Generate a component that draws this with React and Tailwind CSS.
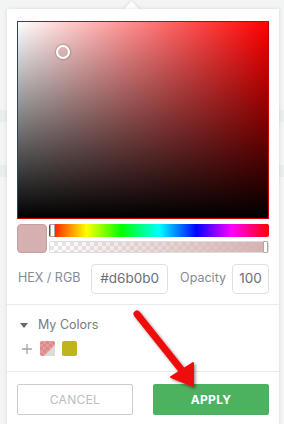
export default function App() {
  return (
    <div
      className="relative w-[284px] h-[424px] overflow-hidden bg-[linear-gradient(to_bottom,#f3f5f5_0px,#f3f5f5_110px,#e9eded_110px,#e9eded_122px,#f3f5f5_122px,#f3f5f5_165px,#e9eded_165px,#e9eded_177px,#f3f5f5_177px)]"
      style={{ fontFamily: 'Inter, "Noto Sans", sans-serif' }}
    >
      {/* popover notch */}
      <div className="absolute left-[124.5px] top-[3.5px] w-[13px] h-[13px] rotate-45 bg-white shadow-[0_0_3px_rgba(0,0,0,0.15)]" />

      {/* panel */}
      <div className="relative z-10 ml-[7px] mt-[9px] w-[272px] h-[430px] bg-white shadow-[0_0_4px_rgba(0,0,0,0.12)] flex flex-col">
        <div className="px-[10px] pt-[12px]">
          {/* saturation / value area */}
          <div className="relative h-[198px] bg-[#ff0000] border border-black/20">
            <div className="h-full w-full bg-[linear-gradient(to_right,#fff,rgba(255,255,255,0))]">
              <div className="h-full w-full bg-[linear-gradient(to_bottom,rgba(0,0,0,0),#000)]" />
            </div>
            <div className="absolute left-[38px] top-[23px] w-[14px] h-[14px] rounded-full border-2 border-white shadow-[0_0_2px_rgba(0,0,0,0.6)]" />
          </div>

          {/* swatch + sliders */}
          <div className="mt-[5px] flex gap-[2px]">
            <div className="w-[30px] h-[29px] rounded-[4px] bg-[#d6b0b0] border border-[#c5a0a0]" />
            <div className="flex-1 flex flex-col gap-[4px]">
              <div className="relative h-[13px] rounded-[2px] bg-[linear-gradient(to_right,#f00,#ff0_17%,#0f0_33%,#0ff_50%,#00f_67%,#f0f_83%,#f00)]">
                <div className="absolute left-[1px] top-0 w-[5px] h-[13px] bg-white border border-[#aaa] rounded-[1px]" />
              </div>
              <div className="relative h-[12px] rounded-[2px] border border-[#ddd] bg-[conic-gradient(#e6e6e6_25%,#fff_0_50%,#e6e6e6_0_75%,#fff_0)] bg-[length:8px_8px]">
                <div className="h-full w-full bg-[linear-gradient(to_right,rgba(214,176,176,0),#d6b0b0)]" />
                <div className="absolute right-[0px] top-[-1px] w-[5px] h-[12px] bg-white border border-[#aaa] rounded-[1px]" />
              </div>
            </div>
          </div>

          {/* hex / opacity */}
          <div className="mt-[11px] flex items-center h-[29px] whitespace-nowrap">
            <span className="ml-[1px] shrink-0 text-[12.5px] text-[#858a92]">HEX / RGB</span>
            <div className="ml-auto shrink-0 w-[77px] h-[30px] rounded-[4px] border border-[#dde1e4] flex items-center justify-center text-[13.5px] text-[#6b6f75]">
              #d6b0b0
            </div>
            <span className="ml-[12px] shrink-0 text-[12.5px] text-[#858a92]">Opacity</span>
            <div className="ml-[6px] shrink-0 w-[37px] h-[30px] rounded-[4px] border border-[#dde1e4] flex items-center justify-center text-[13.5px] text-[#6b6f75]">
              100
            </div>
          </div>
        </div>

        <div className="mt-[11px] h-px bg-[#e6eaeb]" />

        {/* my colors */}
        <div className="px-[10px] pt-[13px] pb-[15px]">
          <div className="flex items-center h-[14px]">
            <svg width="8" height="5" viewBox="0 0 8 5" className="ml-[3px]">
              <path d="M0 0 L8 0 L4 5 Z" fill="#666" />
            </svg>
            <span className="ml-[10px] text-[12.5px] text-[#777b80]">My Colors</span>
          </div>
          <div className="mt-[9px] flex items-center h-[15px]">
            <svg width="10" height="10" viewBox="0 0 10 10" className="ml-[5px]">
              <path d="M5 0 V10 M0 5 H10" stroke="#a0a4a8" strokeWidth="1.3" />
            </svg>
            <div className="ml-[8px] relative w-[15px] h-[15px] rounded-[2px] overflow-hidden bg-[conic-gradient(#e89a9a_25%,#d98a8a_0_50%,#e89a9a_0_75%,#d98a8a_0)] bg-[length:6px_6px]">
              <svg width="15" height="15" viewBox="0 0 15 15" className="absolute inset-0">
                <path d="M15 4 L15 15 L4 15 Z" fill="#dcdcdc" />
              </svg>
            </div>
            <div className="ml-[7px] w-[15px] h-[15px] rounded-[2px] bg-[#c0b41c]" />
          </div>
        </div>

        <div className="h-px bg-[#e6eaeb]" />

        {/* buttons */}
        <div className="px-[10px] pt-[12px] flex justify-between">
          <button className="w-[116px] h-[31px] rounded-[2px] border border-[#c8cdd2] bg-white text-[12px] text-[#b8bdc4] tracking-[0.3px]">
            CANCEL
          </button>
          <button className="w-[116px] h-[31px] rounded-[2px] bg-[#4cb25f] text-[12px] font-bold text-white tracking-[0.3px]">
            APPLY
          </button>
        </div>
      </div>

      {/* red annotation arrow */}
      <svg
        className="absolute left-0 top-0 z-20 pointer-events-none"
        width="284"
        height="424"
        viewBox="0 0 284 424"
      >
        <defs>
          <filter id="sh" x="-20%" y="-20%" width="140%" height="140%">
            <feDropShadow dx="1.5" dy="1.5" stdDeviation="1.5" floodColor="#000" floodOpacity="0.45" />
          </filter>
        </defs>
        <g filter="url(#sh)">
          <line x1="137" y1="314" x2="184" y2="373" stroke="#ee1111" strokeWidth="7" strokeLinecap="round" />
          <path d="M193 386 L171 377 L193 363 Z" fill="#ee1111" stroke="#ee1111" strokeWidth="2" strokeLinejoin="round" />
        </g>
      </svg>
    </div>
  );
}
